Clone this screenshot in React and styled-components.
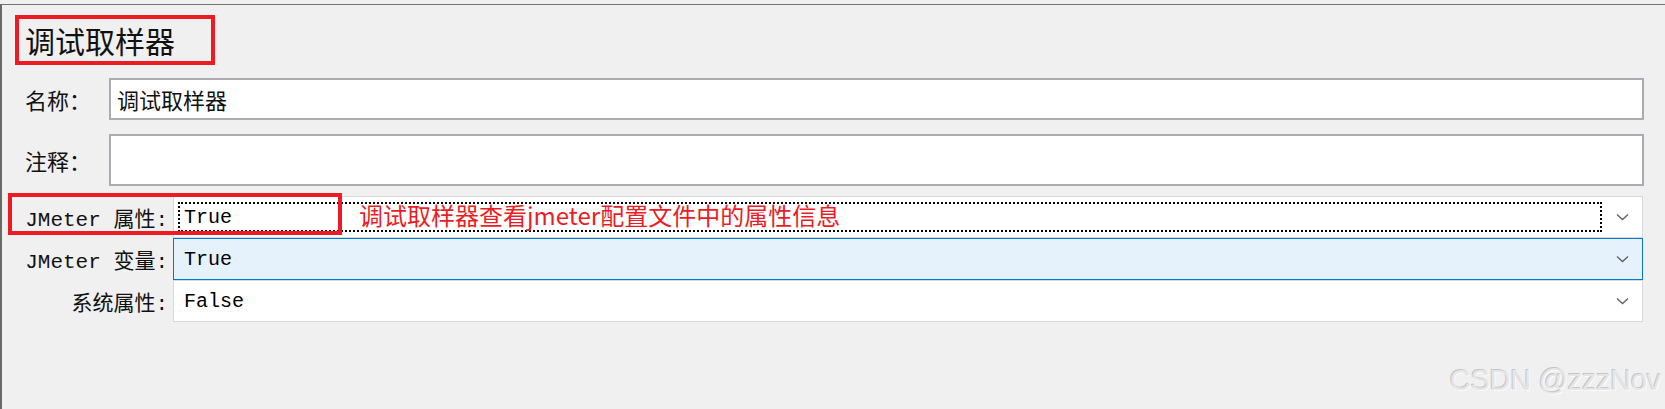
import React from "react";
import styled, { createGlobalStyle } from "styled-components";

const GlobalStyle = createGlobalStyle`
  html, body {
    margin: 0;
    padding: 0;
    background: #f0f0f0;
  }
  body {
    font-family: "Liberation Mono", "Noto Sans CJK SC", monospace;
  }
`;

const Page = styled.div`
  width: 1665px;
  height: 409px;
  padding-top: 4px;
  box-sizing: border-box;
  overflow: hidden;
`;

const Frame = styled.div`
  position: relative;
  height: 405px;
  box-sizing: border-box;
  border-top: 1px solid #737373;
  border-left: 2px solid #6a6a6a;
  padding-top: 10px;
`;

const TitleBox = styled.div`
  display: inline-block;
  margin-left: 13px;
  width: 200px;
  height: 50px;
  box-sizing: border-box;
  border: 4px solid #ed1c24;
  padding-left: 6px;
  font-family: "Noto Sans CJK SC", sans-serif;
  font-size: 30px;
  line-height: 42px;
  color: #111;
`;

const InfoPanel = styled.div`
  display: flex;
  flex-direction: column;
  gap: 14px;
  margin-top: 13px;
  padding: 0 21px 0 23px;
`;

const InfoRow = styled.div`
  display: flex;
  align-items: center;
`;

const InfoLabel = styled.div`
  width: 84px;
  font-family: "Noto Sans CJK SC", sans-serif;
  font-size: 22px;
  color: #111;
`;

const TextField = styled.div`
  flex: 1;
  height: ${(p) => p.h}px;
  box-sizing: border-box;
  border: 2px solid #abacb2;
  background: #fff;
  padding-left: 6px;
  display: flex;
  align-items: center;
  font-family: "Noto Sans CJK SC", sans-serif;
  font-size: 22px;
  color: #111;
`;

const OptionGrid = styled.div`
  position: relative;
  display: grid;
  grid-template-columns: 166px 1fr;
  column-gap: 5px;
  margin-top: 10px;
  padding-right: 22px;
`;

const OptionLabel = styled.div`
  text-align: right;
  align-self: center;
  font-size: 21px;
  color: #111;
  white-space: nowrap;
`;

const Combo = styled.div`
  height: 42px;
  box-sizing: border-box;
  border: 1px solid ${(p) => (p.active ? "#0078d7" : "#d9d9d9")};
  background: ${(p) => (p.active ? "#e5f1fb" : "#fff")};
  display: flex;
  align-items: center;
  padding: 0 0 0 4px;
`;

const ComboValue = styled.div`
  flex: 1;
  height: 30px;
  box-sizing: border-box;
  border: 2px dotted ${(p) => (p.focus ? "#000" : "transparent")};
  padding-left: 4px;
  display: flex;
  align-items: center;
  font-size: 20px;
  color: #000;
`;

const Chevron = styled.div`
  width: 40px;
  display: flex;
  justify-content: center;
  align-items: center;
`;

const MarkBox = styled.div`
  position: absolute;
  left: 6px;
  top: -3px;
  width: 334px;
  height: 42px;
  box-sizing: border-box;
  border: 4px solid #ed1c24;
  pointer-events: none;
`;

const MarkText = styled.div`
  position: absolute;
  left: 357px;
  top: 3px;
  font-family: "Noto Sans CJK SC", sans-serif;
  font-size: 24px;
  line-height: 32px;
  color: #ed1c24;
  white-space: nowrap;
`;

const Watermark = styled.div`
  position: absolute;
  right: 4px;
  bottom: 12px;
  font-family: "Liberation Sans", sans-serif;
  font-size: 29px;
  letter-spacing: -0.3px;
  color: #e6e6e6;
  text-shadow: -1px -1px 0 #c6c6c6, 1px 1px 0 #fbfbfb;
`;

function ChevronIcon() {
  return (
    <svg width="13" height="8" viewBox="0 0 13 8">
      <polyline
        points="1,1.5 6.5,6.5 12,1.5"
        fill="none"
        stroke="#5f5f5f"
        strokeWidth="1.3"
      />
    </svg>
  );
}

const options = [
  { label: "JMeter 属性:", value: "True", focus: true },
  { label: "JMeter 变量:", value: "True", active: true },
  { label: "系统属性:", value: "False" },
];

export default function App() {
  return (
    <>
      <GlobalStyle />
      <Page>
        <Frame>
          <TitleBox>调试取样器</TitleBox>
          <InfoPanel>
            <InfoRow>
              <InfoLabel>名称：</InfoLabel>
              <TextField h={42}>调试取样器</TextField>
            </InfoRow>
            <InfoRow>
              <InfoLabel>注释：</InfoLabel>
              <TextField h={52} />
            </InfoRow>
          </InfoPanel>
          <OptionGrid>
            {options.map((o) => (
              <React.Fragment key={o.label}>
                <OptionLabel>{o.label}</OptionLabel>
                <Combo active={o.active}>
                  <ComboValue focus={o.focus}>{o.value}</ComboValue>
                  <Chevron>
                    <ChevronIcon />
                  </Chevron>
                </Combo>
              </React.Fragment>
            ))}
            <MarkBox />
            <MarkText>调试取样器查看jmeter配置文件中的属性信息</MarkText>
          </OptionGrid>
          <Watermark>CSDN @zzzNov</Watermark>
        </Frame>
      </Page>
    </>
  );
}
